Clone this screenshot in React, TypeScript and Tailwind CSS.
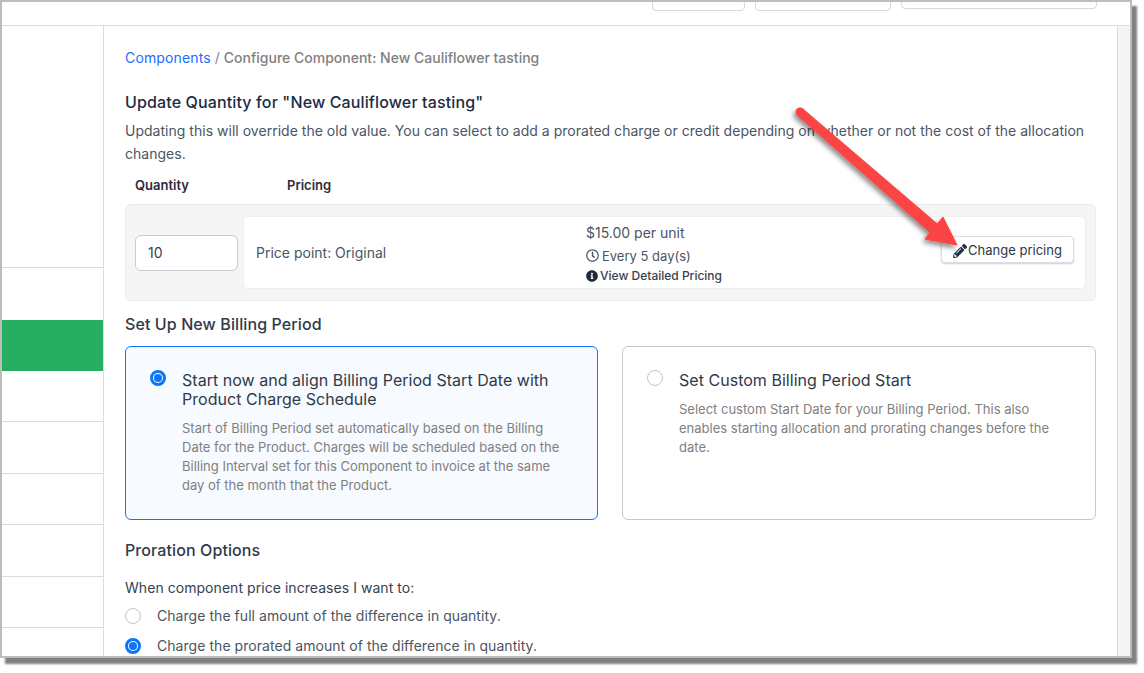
import { FaInfoCircle, FaPencilAlt, FaRegClock } from 'react-icons/fa';

function Radio({ checked }: { checked?: boolean }) {
  return checked ? (
    <span className="block w-4 h-4 shrink-0 rounded-full bg-white border-[3.5px] border-[#0d76f7] p-[1px]">
      <span className="block w-full h-full rounded-full bg-[#0d76f7]" />
    </span>
  ) : (
    <span className="block w-4 h-4 shrink-0 rounded-full bg-white border border-[#c4c4c4]" />
  );
}

const sidebarRows = [
  'h-[242px] border-b',
  'h-[52px]',
  'h-[51px] bg-[#27ae60]',
  'h-[51px] border-b',
  'h-[52px] border-b',
  'h-[51px] border-b',
  'h-[52px] border-b',
  'h-[51px] border-b',
  'h-[40px]',
];

export default function App() {
  return (
    <div className="relative w-[1144px] h-[673px] bg-white overflow-hidden font-['Inter',sans-serif]">
      {/* Screenshot window */}
      <div className="w-[1132px] h-[658px] bg-white border-2 border-[#bdbdbd] flex flex-col overflow-hidden shadow-[5px_6px_2px_#808080]">
        {/* Top bar */}
        <div className="h-[25px] shrink-0 border-b border-[#dcdcdc] flex justify-end items-start gap-[10px] pr-[33px] -mt-px">
          <div className="w-[93px] h-[12px] -mt-[2px] border border-[#d8d8d8] rounded-[4px]" />
          <div className="w-[136px] h-[12px] -mt-[2px] border border-[#d8d8d8] rounded-[4px]" />
          <div className="w-[196px] h-[10px] -mt-[2px] border border-[#d8d8d8] rounded-[4px]" />
        </div>

        <div className="flex flex-1 min-h-0">
          {/* Sidebar */}
          <div className="w-[102px] shrink-0 border-r border-[#dcdcdc] flex flex-col">
            {sidebarRows.map((row, i) => (
              <div key={i} className={`${row} shrink-0 border-[#dcdcdc]`} />
            ))}
          </div>

          {/* Main */}
          <div className="flex-1 min-w-0 pl-[21px] pr-[21px] overflow-hidden">
            <div className="mt-[22px] text-[14px] leading-[20px] text-[#808080] font-medium">
              <span className="text-[#1a6dff] font-normal tracking-[0.15px]">Components</span>
              <span className="font-normal"> / </span>
              Configure Component: New Cauliflower tasting
            </div>

            <h2 className="mt-[23px] text-[16px] leading-[22px] font-medium tracking-[0.13px] text-[#212b45]">
              Update Quantity for "New Cauliflower tasting"
            </h2>
            <p className="mt-[6px] text-[14px] leading-[23px] tracking-[0.02px] text-[#4b5563]">
              Updating this will override the old value. You can select to add a prorated charge or credit depending on whether or not the cost of the allocation changes.
            </p>

            <div className="mt-[11px] flex text-[13px] leading-[18px] font-semibold text-[#2f2a3a]">
              <div className="w-[162px] pl-[10px]">Quantity</div>
              <div>Pricing</div>
            </div>

            {/* Pricing panel */}
            <div className="mt-[10px] h-[97px] bg-[#f5f5f5] border border-[#ececec] rounded-[5px] flex items-center pl-[9px] pr-[9px]">
              <div className="w-[103px] h-[36px] shrink-0 bg-white border border-[#c9c9d0] rounded-[6px] flex items-center pl-[12px] text-[14px] text-[#374151]">
                10
              </div>
              <div className="ml-[5px] flex-1 h-[73px] bg-white border border-[#efefef] rounded-[5px] flex items-center pl-[12px] pr-[11px]">
                <div className="w-[330px] text-[14px] text-[#4b5563]">Price point: Original</div>
                <div className="flex-1 pt-[2px] text-[#4b5563]">
                  <div className="text-[14px] leading-[20px]">$15.00 per unit</div>
                  <div className="mt-[4px] flex items-center gap-[3px] text-[13px] leading-[18px]">
                    <FaRegClock className="w-[13px] h-[13px]" />
                    Every 5 day(s)
                  </div>
                  <div className="mt-[2px] flex items-center gap-[2px] text-[12px] leading-[18px] text-[#374151] font-medium">
                    <FaInfoCircle className="w-[12px] h-[12px] text-[#1f2937]" />
                    View Detailed Pricing
                  </div>
                </div>
                <button className="w-[133px] h-[27px] mb-[6px] pt-[2px] shrink-0 bg-white border border-[#dedee2] rounded-[4px] shadow-[0_1px_2px_rgba(0,0,0,0.2)] flex items-center justify-center gap-[1px] text-[13px] text-[#2d3748]">
                  <FaPencilAlt className="w-[14px] h-[14px] text-[#1f3048]" />
                  Change pricing
                </button>
              </div>
            </div>

            <h3 className="mt-[12px] text-[16px] leading-[22px] font-medium tracking-[0.1px] text-[#2f3a4a]">Set Up New Billing Period</h3>

            {/* Billing period cards */}
            <div className="mt-[11px] grid grid-cols-[473px_1fr] gap-[24px]">
              <div className="h-[174px] bg-[#f7faff] border border-[#0d76f7] rounded-[6px] flex gap-[16px] pl-[24px] pr-[35px] pt-[23px]">
                <Radio checked />
                <div className="pt-[1px]">
                  <div className="text-[16px] leading-[19px] tracking-[0.03px] text-[#2f3a4a]">
                    Start now and align Billing Period Start Date with Product Charge Schedule
                  </div>
                  <div className="mt-[10px] text-[13px] leading-[19px] text-[#808080]">
                    Start of Billing Period set automatically based on the Billing Date for the Product. Charges will be scheduled based on the Billing Interval set for this Component to invoice at the same day of the month that the Product.
                  </div>
                </div>
              </div>
              <div className="h-[174px] bg-white border border-[#c8c8c8] rounded-[6px] flex gap-[16px] pl-[24px] pr-[24px] pt-[23px]">
                <Radio />
                <div className="pt-[1px]">
                  <div className="text-[16px] leading-[19px] tracking-[0.03px] text-[#2f3a4a]">Set Custom Billing Period Start</div>
                  <div className="mt-[10px] text-[13px] leading-[19px] text-[#808080]">
                    Select custom Start Date for your Billing Period. This also enables starting allocation and prorating changes before the date.
                  </div>
                </div>
              </div>
            </div>

            <h3 className="mt-[19px] text-[16px] leading-[22px] font-medium tracking-[0.1px] text-[#2f3a4a]">Proration Options</h3>
            <div className="mt-[17px] text-[14px] leading-[20px] tracking-[0.05px] text-[#374151]">When component price increases I want to:</div>
            <div className="mt-[8px] flex items-center gap-[16px] text-[14px] leading-[20px] tracking-[0.05px] text-[#4b5563]">
              <Radio />
              Charge the full amount of the difference in quantity.
            </div>
            <div className="mt-[10px] flex items-center gap-[16px] text-[14px] leading-[20px] tracking-[0.05px] text-[#4b5563]">
              <Radio checked />
              Charge the prorated amount of the difference in quantity.
            </div>
          </div>

          {/* Scrollbar */}
          <div className="w-[13px] shrink-0 bg-[#f5f5f5] border-l border-[#dcdcdc]" />
        </div>
      </div>

      {/* Annotation arrow */}
      <svg className="absolute left-0 top-0 pointer-events-none" width="1144" height="673" viewBox="0 0 1144 673">
        <defs>
          <filter id="arrowShadow" x="-20%" y="-20%" width="140%" height="140%">
            <feDropShadow dx="-2" dy="3" stdDeviation="2.5" floodColor="#000" floodOpacity="0.45" />
          </filter>
        </defs>
        <g filter="url(#arrowShadow)">
          <circle cx="800" cy="112" r="4.5" fill="#fb4444" />
          <path d="M803 108.6 L938 224 L930 233 L797 115.4 Z" fill="#fb4444" />
          <path d="M943 217 L957 245 L925 239 Z" fill="#fb4444" stroke="#fb4444" strokeWidth="1" strokeLinejoin="round" />
        </g>
      </svg>
    </div>
  );
}
